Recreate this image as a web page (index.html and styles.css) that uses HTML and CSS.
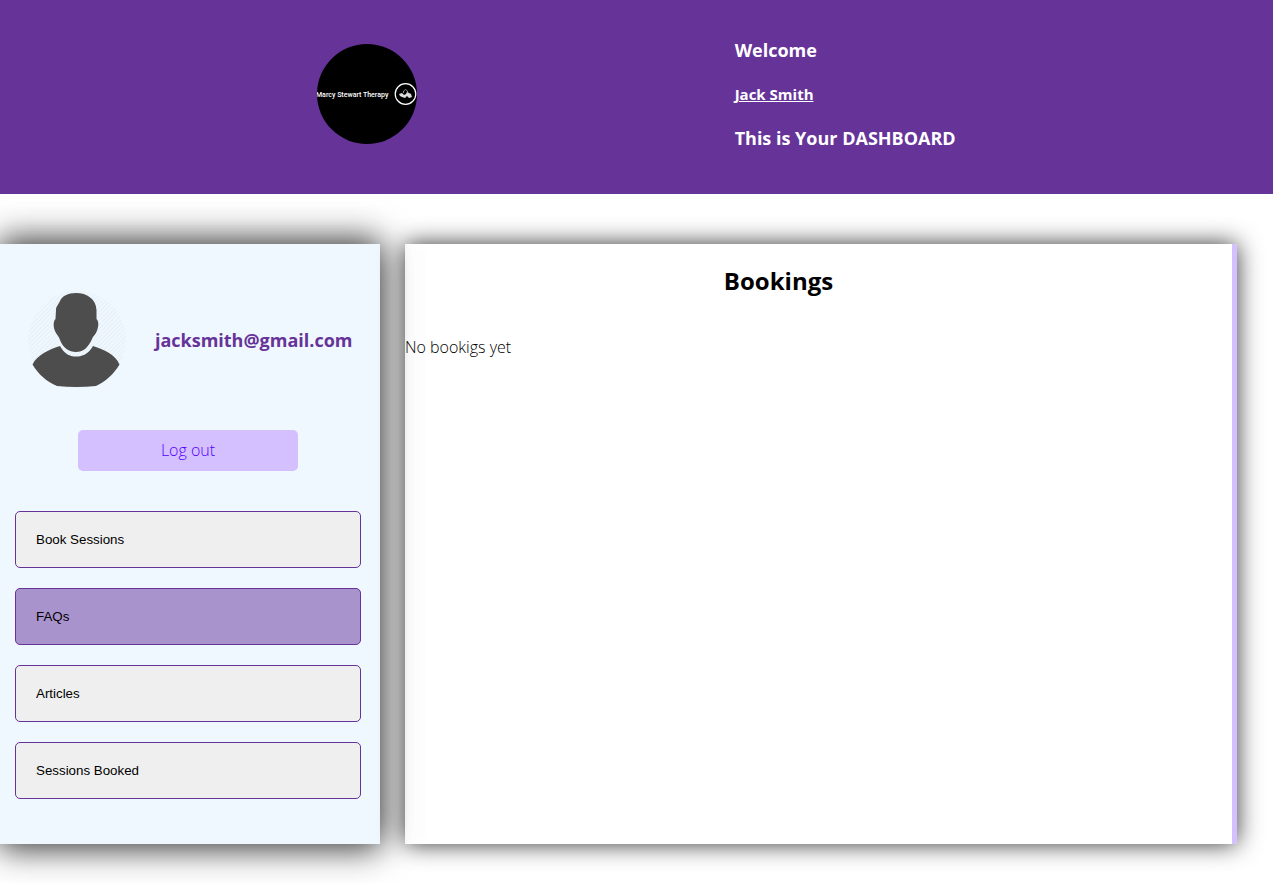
FILE: index.html
```html
<!DOCTYPE html>
<html lang="en">
<head>
<meta charset="utf-8">
<title>Dashboard</title>
<link rel="stylesheet" href="styles.css">
</head>
<body>
<header class="header">
  <svg class="logo" viewBox="0 0 100 100" role="img" aria-label="Marcy Stewart Therapy logo">
    <clipPath id="logo-clip"><circle cx="50" cy="50" r="50"/></clipPath>
    <g clip-path="url(#logo-clip)">
      <rect width="100" height="100"/>
      <text class="logo-text" x="-1" y="53">Marcy Stewart Therapy</text>
      <circle cx="88.500" cy="50" r="10.300" fill="none" stroke="#fff" stroke-width="1.200"/>
      <path d="M82 50l3-1 2 2 2-1 1-2 2 1 2 1 1 3-3 1-2-2-2 2-3-1-2-1z" fill="#ddd"/>
      <path d="M86.500 49v-2l2-1.500 2 1.500v2" fill="none" stroke="#aaa" stroke-width=".8"/>
    </g>
  </svg>
  <div class="greeting">
    <h3 class="greeting-line">Welcome</h3>
    <h4 class="greeting-name">Jack Smith</h4>
    <h3 class="greeting-line">This is Your DASHBOARD</h3>
  </div>
</header>
<div class="dashboard">
  <aside class="sidebar">
    <div class="profile">
      <svg class="avatar" viewBox="0 0 100 100" role="img" aria-label="Profile picture">
        <defs>
          <pattern id="stripes" width="3" height="3" patternUnits="userSpaceOnUse" patternTransform="rotate(45)">
            <rect width="1" height="3" fill="#e6eff6"/>
          </pattern>
        </defs>
        <circle cx="50" cy="50" r="49" fill="url(#stripes)"/>
        <path d="M33 56C38 65 44 66.500 49 66.500S61 65 66 56C77 60 88 64 92.500 74.500C87 84 78 92 69 96Q49 98 30 96C20 92 11 84 5.500 74.500C10 65 23 59 33 56z" fill="#4d4d4d"/>
        <path d="M49 3C41 3 35 6 33 11C32 14 29 16 29 20L28.500 29C26 31 26 38 29 43C31 46 32 47 33 50C36 58 42 62 49 62S61 58 65 49C66 46 68 45 69 43C72 37 72 31 69.500 29V20C69 9 60 3 49 3z" fill="#4d4d4d"/>
      </svg>
      <h3 class="email">jacksmith@gmail.com</h3>
    </div>
    <a class="logout" href="#">Log out</a>
    <nav class="menu">
      <button class="menu-item" type="button">Book Sessions</button>
      <button class="menu-item menu-item-active" type="button">FAQs</button>
      <button class="menu-item" type="button">Articles</button>
      <button class="menu-item" type="button">Sessions Booked</button>
    </nav>
  </aside>
  <main class="bookings">
    <h2 class="bookings-title">Bookings</h2>
    <p class="bookings-empty">No bookigs yet</p>
  </main>
</div>
</body>
</html>
```
FILE: styles.css
```css
* {
  box-sizing: border-box;
}

body {
  margin: 0;
  background: #fff;
  color: #000;
  font-family: "Segoe UI", "Open Sans", "Noto Sans", sans-serif;
  font-size: 16px;
}

h2, h3, h4, p {
  margin: 0;
}

.header {
  display: flex;
  justify-content: space-evenly;
  align-items: center;
  padding: 38px 0 44px;
  background: #663399;
  color: #fff;
}

.logo {
  width: 100px;
  height: 100px;
}

.logo-text {
  fill: #fff;
  font-family: Roboto, sans-serif;
  font-size: 7px;
  font-weight: 500;
}

.greeting {
  display: flex;
  flex-direction: column;
  gap: 20px;
}

.greeting-line {
  font-size: 18px;
  line-height: 24px;
}

.greeting-name {
  font-size: 15px;
  line-height: 24px;
  text-decoration: underline;
}

.dashboard {
  display: flex;
  gap: 25px;
  padding: 50px 36px 40px 0;
}

.sidebar {
  flex: 0 0 380px;
  min-height: 600px;
  padding: 46px 0 45px;
  background: #f0f8ff;
  box-shadow: 0 8px 30px rgba(0, 0, 0, 0.55), 0 -8px 30px rgba(0, 0, 0, 0.55);
}

.profile {
  display: flex;
  justify-content: space-evenly;
  align-items: center;
}

.avatar {
  width: 100px;
  height: 100px;
}

.email {
  color: #663399;
  font-size: 18px;
  line-height: 24px;
}

.logout {
  display: block;
  width: 220px;
  margin: 40px 0 40px 78px;
  border-radius: 5px;
  background: #d4bfff;
  color: #5500ff;
  font-weight: 300;
  line-height: 41px;
  text-align: center;
  text-decoration: none;
}

.menu {
  display: flex;
  flex-direction: column;
  gap: 20px;
  padding: 0 19px 0 15px;
}

.menu-item {
  height: 57px;
  padding: 0 20px;
  border: 1px solid #663399;
  border-radius: 5px;
  background: #efefef;
  color: #000;
  text-align: left;
}

.menu-item-active {
  background: #a993cc;
}

.bookings {
  flex: 1;
  min-height: 600px;
  padding-top: 20px;
  border-right: 5px solid #d4bfff;
  border-radius: 0 3px 3px 0;
  box-shadow: 0 0 25px rgba(0, 0, 0, 0.8);
}

.bookings-title {
  padding-right: 80px;
  font-size: 24px;
  line-height: 34px;
  text-align: center;
}

.bookings-empty {
  margin-top: 37px;
  font-weight: 300;
  line-height: 24px;
}
```
